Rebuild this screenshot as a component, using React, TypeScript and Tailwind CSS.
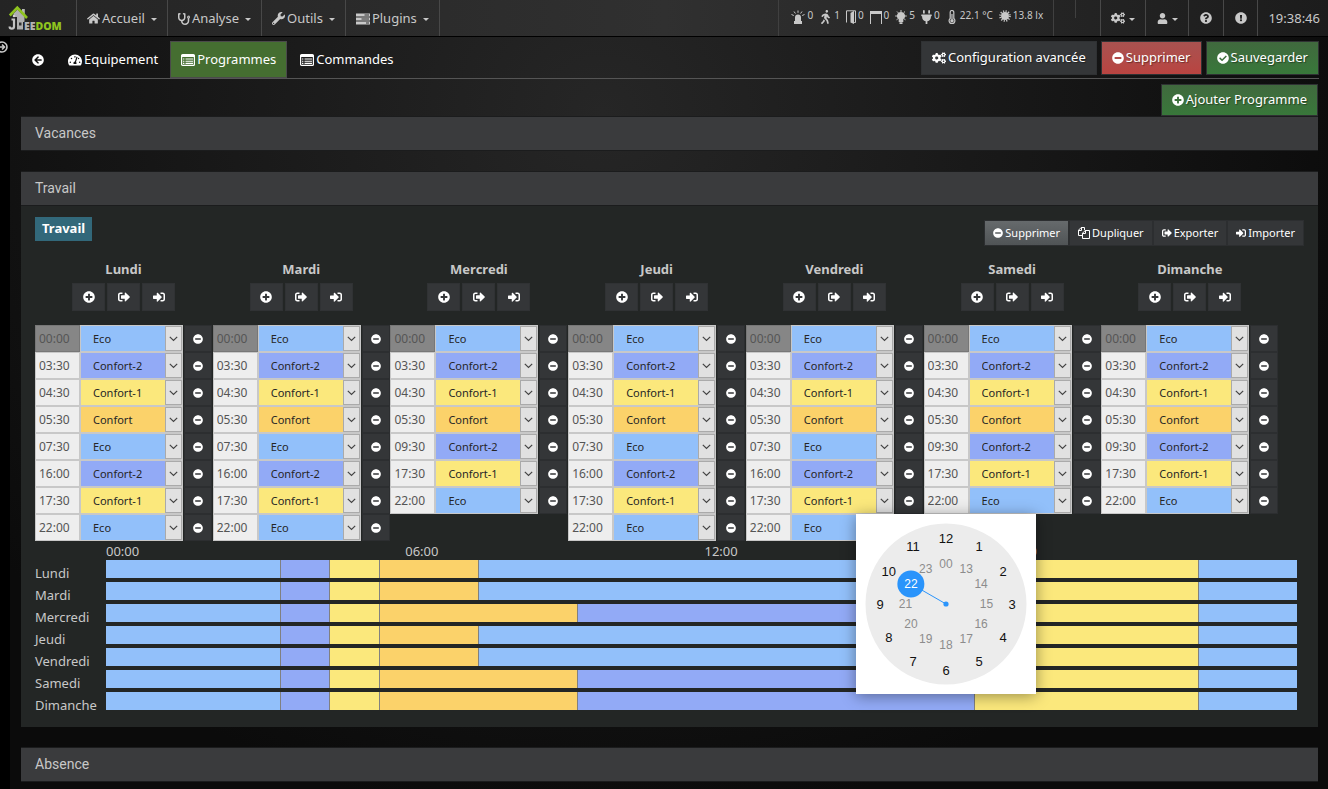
import React from "react";
import {
  FaHome, FaStethoscope, FaWrench, FaCogs, FaUser, FaQuestionCircle,
  FaExclamationCircle, FaArrowCircleLeft, FaTachometerAlt, FaMinusCircle, FaCheckCircle,
  FaPlusCircle, FaSignOutAlt, FaSignInAlt, FaWalking, FaPlug,
} from "react-icons/fa";

type Mode = "Eco" | "Confort-2" | "Confort-1" | "Confort";

const BG: Record<Mode, string> = {
  Eco: "bg-[#92c0fa]",
  "Confort-2": "bg-[#92aaf6]",
  "Confort-1": "bg-[#fbe87c]",
  Confort: "bg-[#fbd26a]",
};
const MODES: Mode[] = ["Eco", "Confort-2", "Confort-1", "Confort"];

type Slot = [string, Mode];
const LONG: Slot[] = [
  ["00:00", "Eco"], ["03:30", "Confort-2"], ["04:30", "Confort-1"], ["05:30", "Confort"],
  ["07:30", "Eco"], ["16:00", "Confort-2"], ["17:30", "Confort-1"], ["22:00", "Eco"],
];
const SHORT: Slot[] = [
  ["00:00", "Eco"], ["03:30", "Confort-2"], ["04:30", "Confort-1"], ["05:30", "Confort"],
  ["09:30", "Confort-2"], ["17:30", "Confort-1"], ["22:00", "Eco"],
];
const DAYS: { name: string; slots: Slot[] }[] = [
  { name: "Lundi", slots: LONG },
  { name: "Mardi", slots: LONG },
  { name: "Mercredi", slots: SHORT },
  { name: "Jeudi", slots: LONG },
  { name: "Vendredi", slots: LONG },
  { name: "Samedi", slots: SHORT },
  { name: "Dimanche", slots: SHORT },
];

const minutes = (t: string) => {
  const [h, m] = t.split(":").map(Number);
  return h * 60 + m;
};

function Caret() {
  return (
    <svg viewBox="0 0 6 3" className="mt-0.5 ml-1 h-[3px] w-1.5" fill="currentColor">
      <path d="M0 0h6L3 3z" />
    </svg>
  );
}

function Tasks() {
  return (
    <svg viewBox="0 0 14 12" className="h-3 w-3.5" fill="currentColor">
      <path d="M0 .5h14v3H0zM0 4.500h14v3H0zM0 8.500h14v3H0z" />
      <path d="M8.500 1.600h4.500v.9H8.500zM5.500 5.600H13v.9H5.500zM10 9.600h3v.9h-3z" fill="#333" />
    </svg>
  );
}

function Files() {
  return (
    <svg viewBox="0 0 12 12" className="size-3" fill="none" stroke="currentColor">
      <path d="M4.500 8.500h-4V3.200L3.200.5h3.300v2.700M3.500.5v3h-3" />
      <path d="M4.500 6.200 7.200 3.500h4.300v8h-7zM7.500 3.500v3h-3" />
    </svg>
  );
}

function ListAlt() {
  return (
    <svg viewBox="0 0 14 12" className="h-3 w-3.5" fill="none" stroke="currentColor">
      <rect x="0.6" y="0.6" width="12.8" height="10.8" rx="1" strokeWidth="1.2" />
      <path d="M0.5 2h13" strokeWidth="2" />
      <path d="M2 5h1.4M2 7.2h1.4M2 9.4h1.4M4.5 5H12M4.5 7.2H12M4.5 9.4H12" strokeWidth="1.1" />
    </svg>
  );
}

function Logo() {
  return (
    <svg viewBox="0 0 56 26" className="h-[26px] w-14" aria-label="Jeedom">
      <path d="M14 4h2.800v8H14z" fill="#b4b4b4" />
      <path d="M5.500 8.500 9.500 4.500 16.500 12v5H15v7.500H9V12H5.500z" fill="#b0b0b0" />
      <path d="M1.800 10.500 9.300 2.600 19 13" fill="none" stroke="#8fc31f" strokeWidth="2.600" />
      <path d="M7.800 13.500v11" stroke="#262626" strokeWidth="1" />
      <path d="M3.500 14.500H6v7a2.200 2.200 0 0 1-4.400 0" fill="none" stroke="#c4c4c4" strokeWidth="2.200" />
      <circle cx="6" cy="11" r="1.300" fill="#d0d0d0" />
      <path d="M11 17.500h2.500v3H11z" fill="#333" />
      <text x="16" y="24.500" fontFamily="Open Sans, sans-serif" fontWeight="800" fontSize="10.500" fill="#b4b4b4" stroke="#262626" strokeWidth="1" paintOrder="stroke">
        EE<tspan fill="#8fc31f">DOM</tspan>
      </text>
    </svg>
  );
}

function Siren() {
  return (
    <svg viewBox="0 0 14 14" className="size-3.5" fill="currentColor">
      <path d="M4 11V7.500a3 3 0 0 1 6 0V11zM3 11h8v3H3z" />
      <path d="M7 .5v2.300M3 1.500l1.400 2M11 1.500 9.600 3.500M.5 4.500l2.300 1M13.500 4.500l-2.300 1" stroke="currentColor" />
    </svg>
  );
}
function Door() {
  return (
    <svg viewBox="0 0 10 14" className="h-3.5 w-2.5" fill="currentColor">
      <path d="M.5 12.500V.8h9v11.700H8.200" fill="none" stroke="currentColor" />
      <path d="M4.500 3 8 .8V14l-3.500-1.500z" />
    </svg>
  );
}
function Shutter() {
  return (
    <svg viewBox="0 0 12 14" className="h-3.5 w-3" fill="currentColor">
      <path d="M0 1h12v3H0z" />
      <path d="M.5 3v11M11.500 3v11" stroke="currentColor" />
    </svg>
  );
}
function Thermo() {
  return (
    <svg viewBox="0 0 12 14" className="h-3.5 w-3" fill="currentColor">
      <path d="M4.200 8.500V2.300a1.800 1.800 0 0 1 3.600 0v6.200a2.900 2.900 0 1 1-3.600 0z" fill="none" stroke="currentColor" strokeWidth="1.200" />
      <path d="M5.400 4h1.200v5.200H5.400z" />
      <circle cx="6" cy="10.800" r="1.700" />
    </svg>
  );
}
function Sun() {
  return (
    <svg viewBox="0 0 14 14" className="size-3" fill="currentColor">
      <circle cx="7" cy="7" r="4.600" />
      <circle cx="7" cy="7" r="5.600" fill="none" stroke="currentColor" strokeWidth="2.400" strokeDasharray="1.300 1.630" />
    </svg>
  );
}
function Bulb() {
  return (
    <svg viewBox="0 0 12 14" className="h-3.5 w-3" fill="currentColor">
      <path d="M6 2a4 4 0 0 0-2.300 7.300V12h4.600V9.300A4 4 0 0 0 6 2zM4.500 12.300h3V14h-3z" />
      <path d="M6 0v2M2 1.500l1.400 1.400M10 1.500 8.600 2.900M.2 6h2M9.800 6h2M1.500 9.800l1.400-1M10.500 9.800l-1.400-1" stroke="currentColor" />
    </svg>
  );
}

const STATS: [React.ReactNode, string][] = [
  [<Siren />, "0"], [<FaWalking className="h-3.5 w-[13px]" />, "1"], [<Door />, "0"], [<Shutter />, "0"],
  [<Bulb />, "5"], [<FaPlug className="h-3.5 w-[11px]" />, "0"], [<Thermo />, "22.1 °C"], [<Sun />, "13.8 lx"],
];

const NAV: [React.ReactNode, string][] = [
  [<FaHome className="size-[13px]" />, "Accueil"],
  [<FaStethoscope className="size-3" />, "Analyse"],
  [<FaWrench className="size-[13px]" />, "Outils"],
  [<Tasks />, "Plugins"],
];

function Navbar() {
  return (
    <header className="flex h-[37px] items-stretch border-b border-black bg-linear-to-r from-[#242424] via-[#303030] to-[#1c1c1c] text-[13px] text-[#c8c8c8]">
      <a href="#" className="flex w-[77px] items-center border-r border-[#484848] pl-2">
        <Logo />
      </a>
      <nav className="flex">
        {NAV.map(([icon, label]) => (
          <a key={label} href="#" className="flex items-center gap-[2px] border-r border-[#484848] px-[10px] pt-px">
            {icon}
            <span>{label}</span>
            <Caret />
          </a>
        ))}
      </nav>
      <div className="ml-auto flex items-stretch">
        <div className="flex w-[276px] items-start gap-[6px] border-x border-[#404040] pt-2 pl-3">
          {STATS.map(([icon, value], i) => (
            <span key={i} className="flex items-start gap-[2px] text-[10px] leading-[14px] whitespace-nowrap">
              <span className="pt-0.5">{icon}</span>
              {value}
            </span>
          ))}
        </div>
        <div className="h-[18px] w-[22px] border-r border-[#404040]" />
        <div className="w-6" />
        <button className="flex w-[45px] items-center justify-center border-l border-[#484848]" aria-label="Réglages">
          <FaCogs className="size-3.5" />
          <Caret />
        </button>
        <button className="flex w-[43px] items-center justify-center border-l border-[#484848]" aria-label="Profil">
          <FaUser className="size-[11px]" />
          <Caret />
        </button>
        <button className="flex w-[35px] items-center justify-center border-l border-[#484848]" aria-label="Aide">
          <FaQuestionCircle className="size-3" />
        </button>
        <button className="flex w-[34px] items-center justify-center border-l border-[#484848]" aria-label="Messages">
          <FaExclamationCircle className="size-3" />
        </button>
        <div className="flex items-center border-l border-[#484848] pt-px pr-2 pl-[10px]">19:38:46</div>
      </div>
    </header>
  );
}

const ACTION = "flex items-center gap-[2px] border border-[#2f3133] px-[10px] text-[13px] text-white [text-shadow:1px_1px_1px_#0006]";

function Toolbar() {
  return (
    <div className="flex h-[38px] items-start justify-between border-b border-[#555]">
      <div className="flex h-[37px] items-stretch text-[13px] text-white">
        <a href="#" className="flex items-center px-3" aria-label="Retour">
          <FaArrowCircleLeft className="size-3" />
        </a>
        <a href="#" className="flex items-center gap-[2px] px-3 pt-px">
          <FaTachometerAlt className="size-3.5" /> Equipement
        </a>
        <a href="#" className="flex items-center gap-[2px] border border-[#4a4a4a] bg-[#456e31] px-[10px] pt-px">
          <ListAlt /> Programmes
        </a>
        <a href="#" className="flex items-center gap-[2px] px-[13px] pt-px">
          <ListAlt /> Commandes
        </a>
      </div>
      <div className="flex h-[34px] items-stretch gap-1">
        <button className={`${ACTION} bg-[#343638]`}>
          <FaCogs className="size-3.5" /> Configuration avancée
        </button>
        <button className={`${ACTION} bg-linear-to-b from-[#a85250] to-[#b94441]`}>
          <FaMinusCircle className="size-3" /> Supprimer
        </button>
        <button className={`${ACTION} bg-linear-to-b from-[#40693e] to-[#38783a]`}>
          <FaCheckCircle className="size-3" /> Sauvegarder
        </button>
      </div>
    </div>
  );
}

function PanelHeading({ children }: { children: React.ReactNode }) {
  return (
    <h2 className="flex h-[35px] items-center border-y border-[#1b1c1d] bg-[#3a3b3d] px-[14px] pb-0.5 font-['Roboto',sans-serif] text-sm text-[#c8c8c8]">
      {children}
    </h2>
  );
}

const SQUARE = "flex h-7 w-[33px] items-center justify-center border border-[#303234] bg-[#343638] text-white";

function SlotRow({ day, slot, first }: { day: string; slot: Slot; first: boolean }) {
  const [time, mode] = slot;
  return (
    <div className="flex h-[27px]">
      <input
        aria-label={`${day} heure ${time}`}
        defaultValue={time}
        disabled={first}
        className={`h-[27px] w-[45px] border pl-[3px] text-xs text-[#555] ${
          first ? "border-[#777] bg-[#868686]" : "border-[#c8c8c8] bg-[#eee]"
        }`}
      />
      <div className={`relative flex h-[27px] w-[103px] border border-[#c8c8c8] ${BG[mode]}`}>
        <select
          aria-label={`${day} mode ${time}`}
          defaultValue={mode}
          className="h-full w-full appearance-none pt-px pl-3 text-[11px] text-[#262626]"
        >
          {MODES.map((m) => (
            <option key={m}>{m}</option>
          ))}
        </select>
        <span className="pointer-events-none absolute inset-y-0 right-0 flex w-[17px] items-center justify-center border border-[#aaa] bg-[#e1e1e1] text-[#444]">
          <svg viewBox="0 0 9 6" className="h-1.5 w-[9px]" fill="none" stroke="currentColor">
            <path d="M.8.800 4.500 4.500 8.200.800" strokeWidth="1.200" />
          </svg>
        </span>
      </div>
      <button
        aria-label={`Supprimer ${day} ${time}`}
        className="ml-px flex h-[27px] w-7 items-center justify-center border border-[#2c2e30] bg-[#343638] text-white"
      >
        <FaMinusCircle className="size-2.5" />
      </button>
    </div>
  );
}

function Clock() {
  const outer = Array.from({ length: 12 }, (_, i) => i + 1);
  const at = (h: number, r: number) => {
    const a = (h * Math.PI) / 6;
    return [90 + r * Math.sin(a), 90 - r * Math.cos(a)];
  };
  const [hx, hy] = at(10, 40);
  return (
    <div className="absolute top-[254px] left-[110px] z-10 size-[180px] bg-white shadow-[0_2px_14px_#0006]">
      <svg viewBox="0 0 180 180" className="size-full font-['Liberation_Sans',Arial,sans-serif]" textAnchor="middle">
        <circle cx="90" cy="90" r="80.500" fill="#ececec" />
        <path d={`M90 90 ${hx} ${hy}`} stroke="#2a94fb" />
        <circle cx="90" cy="90" r="2.600" fill="#2a94fb" />
        <circle cx={hx - 0.5} cy={hy} r="13.500" fill="#2a94fb" />
        {outer.map((h) => {
          const [x, y] = at(h, 66);
          return <text key={h} x={x} y={y + 4.5} fontSize="13" fill="#111">{h}</text>;
        })}
        {outer.map((h) => {
          const [x, y] = at(h, 40.5);
          const n = h === 12 ? "00" : String(h + 12);
          return <text key={n} x={x} y={y + 4} fontSize="12" fill={n === "22" ? "#fff" : "#8c8c8c"}>{n}</text>;
        })}
      </svg>
    </div>
  );
}

function Day({ name, slots }: { name: string; slots: Slot[] }) {
  return (
    <section className="relative min-w-0">
      <div className="flex w-[177px] flex-col items-center">
        <h3 className="h-[23px] text-[13px] leading-[18px] font-bold text-[#c8c8c8]">{name}</h3>
        <div className="mb-[14px] flex gap-[2px]">
          <button className={SQUARE} aria-label={`Ajouter ${name}`}><FaPlusCircle className="size-3" /></button>
          <button className={SQUARE} aria-label={`Exporter ${name}`}><FaSignOutAlt className="size-3" /></button>
          <button className={SQUARE} aria-label={`Importer ${name}`}><FaSignInAlt className="size-3" /></button>
        </div>
      </div>
      {slots.map((s, i) => (
        <SlotRow key={s[0]} day={name} slot={s} first={i === 0} />
      ))}
    </section>
  );
}

function Timeline() {
  return (
    <div className="mt-px grid grid-cols-[71px_1fr] pr-[7px]">
      <div />
      <div className="-mr-[6px] grid h-[18px] grid-cols-4 text-[13px] leading-[18px] text-[#c8c8c8]">
        <span>00:00</span><span>06:00</span><span>12:00</span><span>18:00</span>
      </div>
      {DAYS.map(({ name, slots }) => (
        <React.Fragment key={name}>
          <div className="h-[22px] pt-1 text-[13px] leading-[18px] text-[#c8c8c8]">{name}</div>
          <div className="flex h-[18px]">
            {slots.map(([t, mode], i) => {
              const end = i + 1 < slots.length ? minutes(slots[i + 1][0]) : 1440;
              return (
                <div
                  key={t}
                  className={`${BG[mode]} ${i ? "border-l border-[#808080]" : ""}`}
                  style={{ width: `${((end - minutes(t)) / 1440) * 100}%` }}
                />
              );
            })}
          </div>
        </React.Fragment>
      ))}
    </div>
  );
}

const SMALL = "flex h-[26px] items-center gap-[2px] border border-[#2c2e30] px-2 text-[11px] text-white";

export default function App() {
  return (
    <div className="min-h-screen bg-[#060606] font-['Noto_Sans',sans-serif]">
      <Navbar />
      <div className="flex">
        <aside className="w-[10px] overflow-hidden bg-black pt-1 text-[#c8c8c8]">
          <svg viewBox="0 0 12 12" className="-ml-1 size-3" fill="none" stroke="currentColor" strokeWidth="1.600">
            <circle cx="6" cy="6" r="5" />
            <path d="M2.500 6H8M6 3.500 8.500 6 6 8.500" />
          </svg>
        </aside>
        <main className="min-w-0 flex-1 bg-[radial-gradient(ellipse_at_45%_10%,#262626,#0b0b0b_75%)] pt-1 pr-[9px] pb-2 pl-[10px]">
          <Toolbar />
          <div className="flex justify-end px-px pt-[5px]">
            <button className={`${ACTION} h-8 bg-linear-to-b from-[#40693e] to-[#38783a]`}>
              <FaPlusCircle className="size-3" /> Ajouter Programme
            </button>
          </div>
          <div className="flex flex-col gap-5 px-px">
            <section><PanelHeading>Vacances</PanelHeading></section>
            <section className="bg-[#232625]">
              <PanelHeading>Travail</PanelHeading>
              <div className="px-[14px] pb-[13px]">
                <div className="flex justify-between pt-[11px]">
                  <span className="flex h-6 items-center bg-[#32687a] px-[7px] text-[13px] font-bold text-white">Travail</span>
                  <div className="mt-[3px] flex">
                    <button className={`${SMALL} bg-linear-to-b from-[#666a6c] to-[#505456]`}><FaMinusCircle className="size-2.5" />Supprimer</button>
                    <button className={`${SMALL} bg-[#343638]`}><Files />Dupliquer</button>
                    <button className={`${SMALL} bg-[#343638]`}><FaSignOutAlt className="size-2.5" />Exporter</button>
                    <button className={`${SMALL} bg-[#343638]`}><FaSignInAlt className="size-2.5" />Importer</button>
                  </div>
                </div>
                <div className="grid grid-cols-7 pt-[14px] pr-[25px]">
                  {DAYS.map((d) => (
                    <div key={d.name} className="relative">
                      <Day {...d} />
                      {d.name === "Vendredi" && <Clock />}
                    </div>
                  ))}
                </div>
                <Timeline />
              </div>
            </section>
            <section><PanelHeading>Absence</PanelHeading></section>
          </div>
        </main>
      </div>
    </div>
  );
}
